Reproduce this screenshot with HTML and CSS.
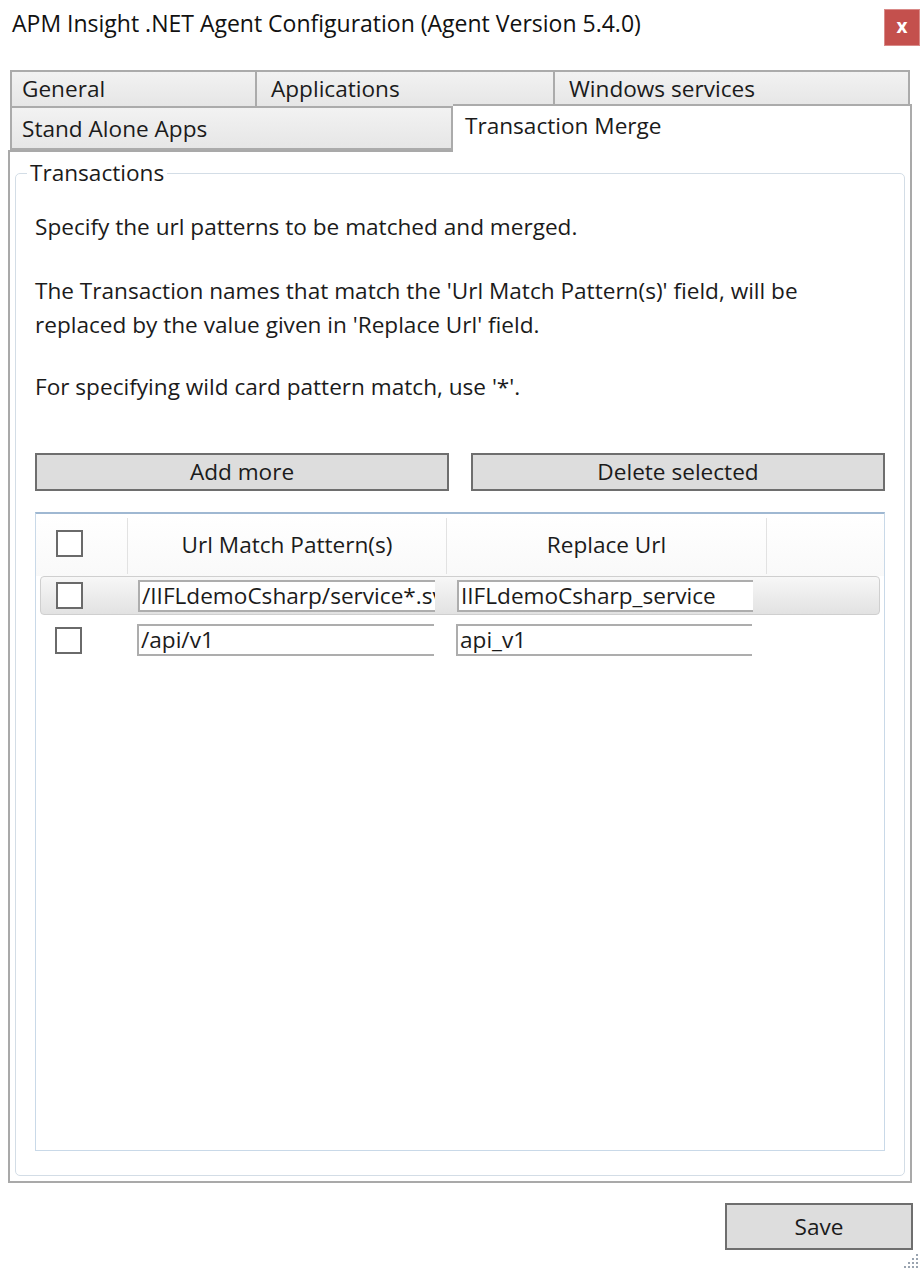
FILE: index.html
```html
<!DOCTYPE html>
<html>
<head>
<meta charset="utf-8">
<title>APM Insight .NET Agent Configuration</title>
<link rel="stylesheet" href="styles.css">
</head>
<body>
<div class="window">
  <div class="titlebar">
    <div class="title">APM Insight .NET Agent Configuration (Agent Version 5.4.0)</div>
    <div class="close">x</div>
  </div>
  <div class="tabs">
    <div class="tabrow">
      <div class="tab t-general">General</div>
      <div class="tab t-apps">Applications</div>
      <div class="tab t-win">Windows services</div>
    </div>
    <div class="tabrow row2">
      <div class="tab t-standalone">Stand Alone Apps</div>
      <div class="tab active">Transaction Merge</div>
    </div>
  </div>
  <div class="panel">
    <fieldset class="group">
      <legend>Transactions</legend>
      <p class="p1">Specify the url patterns to be matched and merged.</p>
      <p class="p2">The Transaction names that match the 'Url Match Pattern(s)' field, will be replaced by the value given in 'Replace Url' field.</p>
      <p class="p3">For specifying wild card pattern match, use '*'.</p>
      <div class="actions">
        <div class="btn">Add more</div>
        <div class="btn">Delete selected</div>
      </div>
      <div class="grid">
        <div class="grid-head">
          <div class="hcell c-check"><span class="cb"></span></div>
          <div class="hcell c-url">Url Match Pattern(s)</div>
          <div class="hcell c-rep">Replace Url</div>
          <div class="hcell c-rest"></div>
        </div>
        <div class="grid-row selected">
          <div class="rcell c-check"><span class="cb"></span></div>
          <div class="rcell c-url"><div class="field">/IIFLdemoCsharp/service*.svc</div></div>
          <div class="rcell c-rep"><div class="field">IIFLdemoCsharp_service</div></div>
        </div>
        <div class="grid-row">
          <div class="rcell c-check"><span class="cb"></span></div>
          <div class="rcell c-url"><div class="field">/api/v1</div></div>
          <div class="rcell c-rep"><div class="field">api_v1</div></div>
        </div>
      </div>
    </fieldset>
  </div>
  <div class="footer">
    <div class="btn save">Save</div>
    <svg class="grip" width="18" height="18" viewBox="0 0 18 18">
      <g fill="#9aa4b0">
        <rect x="14" y="2" width="2" height="2"/>
        <rect x="14" y="6" width="2" height="2"/>
        <rect x="10" y="6" width="2" height="2"/>
        <rect x="14" y="10" width="2" height="2"/>
        <rect x="10" y="10" width="2" height="2"/>
        <rect x="6" y="10" width="2" height="2"/>
        <rect x="14" y="14" width="2" height="2"/>
        <rect x="10" y="14" width="2" height="2"/>
        <rect x="6" y="14" width="2" height="2"/>
        <rect x="2" y="14" width="2" height="2"/>
      </g>
    </svg>
  </div>
</div>
</body>
</html>
```
FILE: styles.css
```css
html, body {
  margin: 0;
  padding: 0;
  background: #ffffff;
}
body {
  font-family: "Open Sans", "Noto Sans", "Liberation Sans", sans-serif;
  font-size: 22.6px;
  color: #1b1b1b;
}
.window {
  width: 922px;
  height: 1272px;
  box-sizing: border-box;
  padding: 0 10px 0 8px;
  overflow: hidden;
}

/* title bar */
.titlebar {
  height: 70px;
  display: flex;
  justify-content: space-between;
  align-items: flex-start;
}
.title {
  padding: 7px 0 0 4px;
  font-size: 23px;
  line-height: 32px;
  color: #111;
}
.close {
  margin-top: 9px;
  margin-right: -8px;
  width: 36px;
  height: 37px;
  box-sizing: border-box;
  background: #c4504d;
  border: 1px solid #d98a88;
  color: #fff;
  font-weight: bold;
  font-size: 19px;
  line-height: 33px;
  text-align: center;
}

/* tabs */
.tabs {
  padding-left: 2px;
}
.tabrow {
  display: flex;
}
.tab {
  box-sizing: border-box;
  background: linear-gradient(#f2f2f2, #e6e6e6);
  border: 2px solid #ababab;
  padding: 0 0 0 10px;
  line-height: 34px;
  white-space: nowrap;
}
.t-general { width: 247px; height: 38px; }
.t-apps { width: 298px; height: 38px; border-left: none; padding-left: 14px; }
.t-win { width: 355px; height: 38px; border-left: none; padding-left: 14px; }
.row2 .tab { border-top: none; }
.t-standalone {
  width: 443px;
  height: 42px;
  line-height: 42px;
}
.tab.active {
  position: relative;
  z-index: 2;
  width: 459px;
  height: 48px;
  margin-top: -4px;
  margin-bottom: -2px;
  background: #ffffff;
  border: 2px solid #ababab;
  border-bottom: none;
  border-left: none;
  padding-left: 12px;
  line-height: 40px;
}

/* panel */
.panel {
  box-sizing: border-box;
  height: 1033px;
  border: 2px solid #a9a9a9;
  background: #fff;
  padding: 6px 5px 5px 5px;
}
.group {
  margin: 0;
  height: 1018px;
  box-sizing: border-box;
  border: 1px solid #d3dde6;
  border-radius: 5px;
  padding: 0 19px 0 19px;
}
.group legend {
  margin-left: -8px;
  padding: 0 3px;
  line-height: 30px;
}
.group p {
  margin: 0;
  line-height: 34px;
}
.p1 { margin-top: 22px !important; }
.p2 { margin-top: 30px !important; }
.p3 { margin-top: 28px !important; }

/* buttons */
.actions {
  margin-top: 49px;
  display: flex;
  gap: 22px;
}
.btn {
  box-sizing: border-box;
  background: #dddddd;
  border: 2px solid #6e6e6e;
  text-align: center;
}
.actions .btn {
  flex: 1;
  height: 38px;
  line-height: 34px;
}

/* grid */
.grid {
  margin-top: 21px;
  height: 639px;
  box-sizing: border-box;
  border: 1px solid #c9d9e8;
  border-top: 2px solid #9fb8d2;
}
.grid-head {
  display: flex;
  height: 62px;
  background: linear-gradient(#ffffff, #f9f9f9);
}
.hcell {
  box-sizing: border-box;
  height: 56px;
  margin-top: 4px;
  border-right: 1px solid #e2e2e2;
  display: flex;
  align-items: center;
  justify-content: center;
  padding-bottom: 4px;
}
.hcell.c-check {
  width: 92px;
  justify-content: flex-start;
  padding-left: 20px;
  padding-bottom: 6px;
}
.hcell.c-url { width: 319px; }
.hcell.c-rep { width: 320px; }
.hcell.c-rest { flex: 1; border-right: none; }
.cb {
  display: block;
  width: 27px;
  height: 27px;
  box-sizing: border-box;
  border: 2px solid #6a6a6a;
  background: #fff;
}
.grid-row {
  display: flex;
  align-items: center;
  margin: 0 4px;
  height: 40px;
  box-sizing: border-box;
}
.grid-row.selected {
  height: 39px;
  margin-top: 0;
  background: linear-gradient(#f7f7f7, #e2e2e2);
  border: 1px solid #cfcfcf;
  border-radius: 4px;
}
.grid-row + .grid-row {
  margin-top: 5px;
}
.rcell.c-check {
  width: 87px;
  padding-left: 15px;
  box-sizing: border-box;
}
.rcell.c-url {
  width: 319px;
  padding-left: 10px;
  box-sizing: border-box;
}
.rcell.c-rep {
  width: 320px;
  padding-left: 10px;
  box-sizing: border-box;
}
.c-url .field { width: 297px; }
.c-rep .field { width: 296px; }
.field {
  box-sizing: border-box;
  height: 32px;
  background: #fff;
  border: 2px solid #adadad;
  border-right: none;
  padding-left: 2px;
  line-height: 28px;
  white-space: nowrap;
  overflow: hidden;
}

/* footer */
.footer {
  display: flex;
  flex-direction: column;
  align-items: flex-end;
}
.btn.save {
  margin-top: 20px;
  margin-right: -1px;
  width: 188px;
  height: 47px;
  line-height: 43px;
}
.grip {
  margin-top: 2px;
  margin-right: -8px;
}
```
